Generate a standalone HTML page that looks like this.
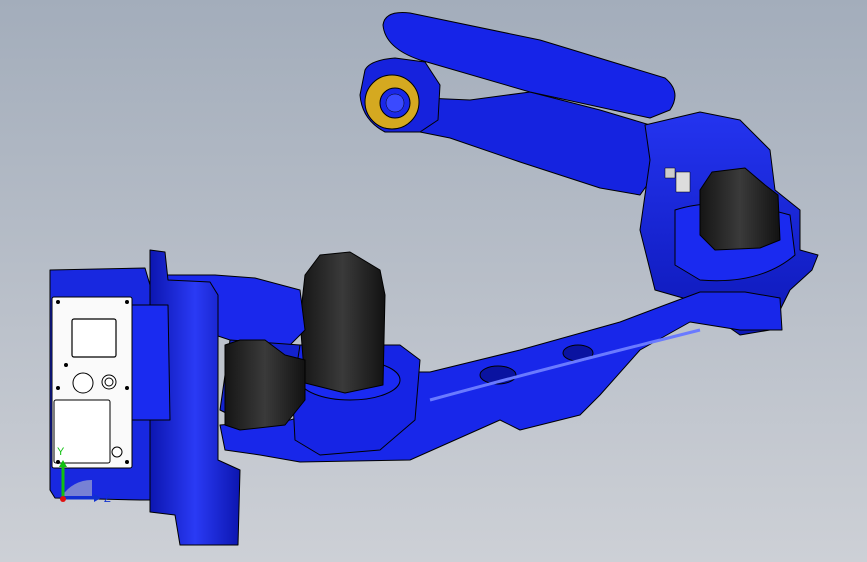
<!DOCTYPE html>
<html><head><style>
html,body{margin:0;padding:0;width:867px;height:562px;overflow:hidden}
svg{display:block}
</style></head><body>
<svg width="867" height="562" viewBox="0 0 867 562" xmlns="http://www.w3.org/2000/svg" font-family="Liberation Sans, sans-serif">
<defs>
<linearGradient id="bg" x1="0" y1="0" x2="0" y2="1">
<stop offset="0" stop-color="#a3adbb"/><stop offset="1" stop-color="#cdd0d6"/></linearGradient>
<linearGradient id="bl" x1="0" y1="0" x2="0" y2="1">
<stop offset="0" stop-color="#2434f0"/><stop offset="1" stop-color="#0d18b8"/></linearGradient>
<linearGradient id="bl2" x1="0" y1="0" x2="1" y2="0">
<stop offset="0" stop-color="#0c16b0"/><stop offset="0.5" stop-color="#2a3af5"/><stop offset="1" stop-color="#0c16b0"/></linearGradient>
<linearGradient id="blk" x1="0" y1="0" x2="1" y2="0">
<stop offset="0" stop-color="#151515"/><stop offset="0.5" stop-color="#3a3a3a"/><stop offset="1" stop-color="#121212"/></linearGradient>
</defs>
<rect width="867" height="562" fill="url(#bg)"/>
<g stroke="#000" stroke-width="1" stroke-linejoin="round">
<!-- upper arm lower link -->
<path d="M425,98 L470,100 L530,92 L600,110 L650,125 L665,160 L640,195 L600,188 L520,162 L450,138 L420,132 Z" fill="#1523e0"/>
<!-- upper arm top link -->
<path d="M383,25 Q385,10 410,13 L540,40 L665,78 Q682,92 670,110 L650,118 L530,92 L420,60 Q385,48 383,25 Z" fill="#1624e8"/>
<!-- wrist housing -->
<path d="M365,70 Q370,60 395,58 L425,62 L440,85 L438,120 L420,132 L385,132 Q362,120 360,95 Z" fill="#1622dd"/>
<circle cx="392" cy="102" r="27" fill="#d5a920"/>
<circle cx="395" cy="103" r="15" fill="#1a28e8"/>
<circle cx="395" cy="103" r="9" fill="#3a4aff" stroke-width="0.5"/>
<!-- elbow -->
<path d="M645,125 L700,112 L740,120 L770,150 L775,190 L800,210 L800,250 L818,255 L812,270 L790,290 L770,330 L740,335 L690,300 L655,290 L640,230 L650,160 Z" fill="url(#bl)"/>
<path d="M675,210 Q720,195 790,215 L795,255 Q760,285 700,280 L675,265 Z" fill="#1a2af0"/>
<!-- elbow motor -->
<path d="M700,190 L712,172 L745,168 L765,185 L778,195 L780,240 L760,248 L715,250 L700,235 Z" fill="url(#blk)"/>
<rect x="676" y="172" width="14" height="20" fill="#ddd" stroke-width="0.5"/>
<rect x="665" y="168" width="10" height="10" fill="#ccc" stroke-width="0.5"/>
<!-- forearm -->
<path d="M385,372 L430,372 L520,350 L620,322 L665,305 L700,292 L745,292 L780,298 L782,330 L740,330 L690,322 L640,350 L600,395 L580,415 L520,430 L500,420 L455,440 L410,460 L300,462 L260,455 L225,450 L220,425 L290,420 L360,400 Z" fill="#1827ea"/>
<ellipse cx="498" cy="375" rx="18" ry="9" fill="#0a13a0"/>
<ellipse cx="578" cy="353" rx="15" ry="8" fill="#0a13a0"/>
<path d="M430,400 Q540,370 700,330" fill="none" stroke="#6a7aff" stroke-width="3"/>
<!-- shoulder ring -->
<path d="M290,345 L400,345 L420,360 L415,420 L380,450 L320,455 L295,440 Z" fill="#1624e5"/>
<ellipse cx="350" cy="380" rx="50" ry="20" fill="#1a2af2"/>
<!-- shoulder motor -->
<path d="M305,275 L320,255 L350,252 L380,270 L385,295 L383,385 L345,393 L305,383 L300,320 Z" fill="url(#blk)"/>
<!-- lower arm -->
<path d="M160,275 L215,275 L255,278 L300,290 L305,330 L290,345 L255,345 L230,340 L215,335 L200,300 Z" fill="#1a28ec"/>
<path d="M230,340 L300,345 L290,410 L240,420 L220,410 Z" fill="#1322cf"/>
<!-- side motor -->
<path d="M240,340 L265,340 L285,355 L305,360 L305,400 L285,425 L240,430 L225,425 L225,345 Z" fill="url(#blk)"/>
<!-- base -->
<path d="M150,250 L165,252 L168,280 L210,282 L218,295 L218,460 L240,470 L238,545 L180,545 L175,515 L150,512 Z" fill="url(#bl2)"/>
<path d="M50,270 L145,268 L150,285 L150,500 L140,500 L55,498 L50,490 Z" fill="#1828e0"/>
<path d="M130,305 L168,305 L170,420 L132,420 Z" fill="#1a2bf0"/>
<!-- white panel -->
<rect x="52" y="297" width="80" height="171" rx="2" fill="#fafafa"/>
<rect x="72" y="319" width="44" height="38" rx="2" fill="#fff" stroke-width="1.2"/>
<circle cx="83" cy="383" r="10" fill="#fff"/>
<circle cx="109" cy="382" r="7" fill="#fff"/>
<circle cx="109" cy="382" r="4" fill="#fff"/>
<rect x="54" y="400" width="56" height="63" rx="2" fill="#fff"/>
<circle cx="117" cy="452" r="5" fill="#fff"/>
</g>
<g fill="#000">
<circle cx="58" cy="302" r="2"/><circle cx="127" cy="302" r="2"/><circle cx="58" cy="388" r="2"/><circle cx="127" cy="388" r="2"/>
<circle cx="58" cy="462" r="2"/><circle cx="127" cy="462" r="2"/><circle cx="66" cy="365" r="2"/>
</g>
<!-- axis triad -->
<path d="M92,480 A35,35 0 0 0 62,496 L92,496 Z" fill="#b8bccc" opacity="0.6"/>
<line x1="63" y1="498" x2="63" y2="465" stroke="#10c010" stroke-width="3"/>
<polygon points="59,467 67,467 63,460" fill="#10c010"/>
<line x1="63" y1="498" x2="95" y2="498" stroke="#1030d0" stroke-width="3"/>
<polygon points="94,494 101,498 94,502" fill="#1030d0"/>
<circle cx="63" cy="499" r="3" fill="#e01010"/>
<text x="57" y="455" font-size="11" fill="#10c010">Y</text>
<text x="104" y="502" font-size="11" fill="#1030d0">Z</text>
</svg>
</body></html>
